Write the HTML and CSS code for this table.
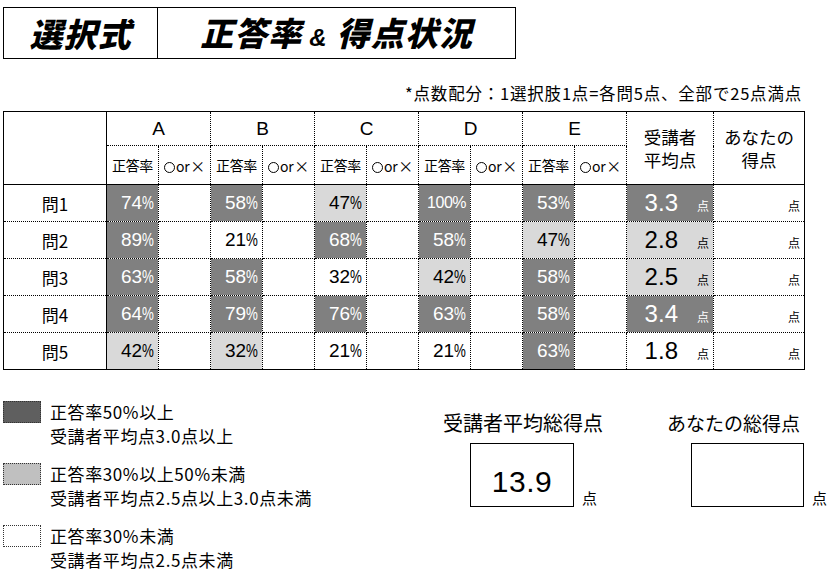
FILE: index.html
```html
<!DOCTYPE html>
<html lang="ja">
<head>
<meta charset="utf-8">
<link rel="stylesheet" href="styles.css">
</head>
<body>
<div class="page">
  <div class="title">
    <div class="title-left"><span class="title-text">選択式</span></div>
    <div class="title-right"><span class="title-text">正答率<span class="amp">&amp;</span>得点状況</span></div>
  </div>
  <div class="note">*点数配分：1選択肢1点=各問5点、全部で25点満点</div>
  <table class="grid">
    <colgroup>
      <col class="c-label">
      <col class="c-half"><col class="c-half">
      <col class="c-half"><col class="c-half">
      <col class="c-half"><col class="c-half">
      <col class="c-half"><col class="c-half">
      <col class="c-half"><col class="c-half">
      <col class="c-avg">
      <col class="c-you">
    </colgroup>
    <tr class="hr1">
      <td class="label-head" rowspan="2"></td>
      <td class="choice" colspan="2">A</td>
      <td class="choice" colspan="2">B</td>
      <td class="choice" colspan="2">C</td>
      <td class="choice" colspan="2">D</td>
      <td class="choice" colspan="2">E</td>
      <td class="head2" rowspan="2">受講者<br>平均点</td>
      <td class="head2" rowspan="2">あなたの<br>得点</td>
    </tr>
    <tr class="hr2">
      <td class="sub">正答率</td><td class="sub"><span class="circ" aria-label="○"></span>or<span class="cross">×</span></td>
      <td class="sub">正答率</td><td class="sub"><span class="circ" aria-label="○"></span>or<span class="cross">×</span></td>
      <td class="sub">正答率</td><td class="sub"><span class="circ" aria-label="○"></span>or<span class="cross">×</span></td>
      <td class="sub">正答率</td><td class="sub"><span class="circ" aria-label="○"></span>or<span class="cross">×</span></td>
      <td class="sub">正答率</td><td class="sub"><span class="circ" aria-label="○"></span>or<span class="cross">×</span></td>
    </tr>
    <tr class="row">
      <td class="q">問1</td>
      <td class="p dark">74<span class="pc">%</span></td><td></td>
      <td class="p dark">58<span class="pc">%</span></td><td></td>
      <td class="p light">47<span class="pc">%</span></td><td></td>
      <td class="p dark thin">100%</td><td></td>
      <td class="p dark">53<span class="pc">%</span></td><td></td>
      <td class="avg dark"><span class="num">3.3</span><span class="pt">点</span></td>
      <td class="you"><span class="pt">点</span></td>
    </tr>
    <tr class="row">
      <td class="q">問2</td>
      <td class="p dark">89<span class="pc">%</span></td><td></td>
      <td class="p">21<span class="pc">%</span></td><td></td>
      <td class="p dark">68<span class="pc">%</span></td><td></td>
      <td class="p dark">58<span class="pc">%</span></td><td></td>
      <td class="p light">47<span class="pc">%</span></td><td></td>
      <td class="avg light"><span class="num">2.8</span><span class="pt">点</span></td>
      <td class="you"><span class="pt">点</span></td>
    </tr>
    <tr class="row">
      <td class="q">問3</td>
      <td class="p dark">63<span class="pc">%</span></td><td></td>
      <td class="p dark">58<span class="pc">%</span></td><td></td>
      <td class="p">32<span class="pc">%</span></td><td></td>
      <td class="p light">42<span class="pc">%</span></td><td></td>
      <td class="p dark">58<span class="pc">%</span></td><td></td>
      <td class="avg light"><span class="num">2.5</span><span class="pt">点</span></td>
      <td class="you"><span class="pt">点</span></td>
    </tr>
    <tr class="row">
      <td class="q">問4</td>
      <td class="p dark">64<span class="pc">%</span></td><td></td>
      <td class="p dark">79<span class="pc">%</span></td><td></td>
      <td class="p dark">76<span class="pc">%</span></td><td></td>
      <td class="p dark">63<span class="pc">%</span></td><td></td>
      <td class="p dark">58<span class="pc">%</span></td><td></td>
      <td class="avg dark"><span class="num">3.4</span><span class="pt">点</span></td>
      <td class="you"><span class="pt">点</span></td>
    </tr>
    <tr class="row">
      <td class="q">問5</td>
      <td class="p light">42<span class="pc">%</span></td><td></td>
      <td class="p light">32<span class="pc">%</span></td><td></td>
      <td class="p">21<span class="pc">%</span></td><td></td>
      <td class="p">21<span class="pc">%</span></td><td></td>
      <td class="p dark">63<span class="pc">%</span></td><td></td>
      <td class="avg"><span class="num">1.8</span><span class="pt">点</span></td>
      <td class="you"><span class="pt">点</span></td>
    </tr>
  </table>

  <div class="bottom">
    <div class="legend">
      <div class="legend-item">
        <div class="swatch swatch-dark"></div>
        <div class="legend-text">正答率50%以上<br>受講者平均点3.0点以上</div>
      </div>
      <div class="legend-item">
        <div class="swatch swatch-light"></div>
        <div class="legend-text">正答率30%以上50%未満<br>受講者平均点2.5点以上3.0点未満</div>
      </div>
      <div class="legend-item">
        <div class="swatch swatch-white"></div>
        <div class="legend-text">正答率30%未満<br>受講者平均点2.5点未満</div>
      </div>
    </div>
    <div class="total total-avg">
      <div class="total-label">受講者平均総得点</div>
      <div class="total-row">
        <div class="total-box"><span class="total-num">13.9</span></div>
        <span class="total-unit">点</span>
      </div>
    </div>
    <div class="total total-you">
      <div class="total-label">あなたの総得点</div>
      <div class="total-row">
        <div class="total-box"></div>
        <span class="total-unit">点</span>
      </div>
    </div>
  </div>
</div>
</body>
</html>
```

FILE: styles.css
```css
html, body {
  margin: 0;
  padding: 0;
  background: #fff;
}
body {
  font-family: "Noto Sans CJK JP", "Noto Sans", sans-serif;
  color: #000;
}
.page {
  padding: 7px 0 0 3px;
}

/* Title */
.title {
  display: flex;
  width: 513px;
  height: 52px;
  box-sizing: border-box;
  border: 1px solid #000;
}
.title-left {
  width: 153px;
  border-right: 1px solid #000;
  display: flex;
  align-items: center;
  justify-content: center;
}
.title-right {
  flex: 1;
  display: flex;
  align-items: center;
  justify-content: center;
}
.title-text {
  font-size: 33px;
  font-weight: 900;
  font-style: italic;
  line-height: 1;
  letter-spacing: 1px;
}
.amp {
  font-size: 24px;
  font-weight: 700;
  margin: 0 9px 0 7px;
  font-family: "Liberation Sans", sans-serif;
}

/* Note */
.note {
  width: 799px;
  text-align: right;
  font-size: 16.5px;
  line-height: 20px;
  margin-top: 24px;
  letter-spacing: 0.8px;
}

/* Table */
.grid {
  border-collapse: collapse;
  table-layout: fixed;
  margin-top: 8px;
  border: 1px solid #000;
}
.c-label { width: 103px; }
.c-half { width: 52px; }
.c-avg { width: 87px; }
.c-you { width: 91px; }
.grid td {
  border: 1px dotted #000;
  padding: 0;
  white-space: nowrap;
  overflow: hidden;
}
.grid .label-head,
.grid .q {
  border-right: 1px solid #000;
}
.hr2 td,
.grid .head2,
.grid .label-head {
  border-bottom: 1px solid #000;
}
.hr1 { height: 34px; }
.hr2 { height: 39px; }
.row { height: 37px; }

.choice {
  text-align: center;
  font-family: "Liberation Sans", sans-serif;
  font-size: 19px;
  font-weight: 300;
}
.sub {
  text-align: center;
  font-size: 14px;
  letter-spacing: -0.3px;
}
.circ {
  display: inline-block;
  width: 11px;
  height: 11px;
  box-sizing: border-box;
  border: 1px solid #000;
  border-radius: 50%;
  margin-right: 1px;
  vertical-align: -1px;
}
.cross {
  font-size: 15px;
  margin-left: 1px;
}
.head2 {
  text-align: center;
  font-size: 17.5px;
  line-height: 23px;
}
.q {
  text-align: center;
  font-size: 17px;
}
.p {
  text-align: right;
  padding-right: 4px !important;
  font-family: "Liberation Sans", sans-serif;
  font-size: 19px;
}
.pc {
  display: inline-block;
  transform: scaleX(0.7);
  transform-origin: left center;
  margin-right: -5px;
}
.thin {
  font-size: 16px;
  font-weight: 300;
  letter-spacing: -0.5px;
}
.dark {
  background: #808080;
  color: #fff;
}
.light {
  background: #d9d9d9;
}
.avg {
  text-align: right;
  vertical-align: bottom;
  padding-right: 4px !important;
}
.num {
  font-family: "Liberation Sans", sans-serif;
  font-size: 24px;
  line-height: 30px;
}
.pt {
  font-size: 12px;
  margin-left: 19px;
  line-height: 30px;
}
.you {
  text-align: right;
  vertical-align: bottom;
  padding-right: 4px !important;
}

/* Bottom */
.bottom {
  display: flex;
  margin-top: 31px;
}
.legend {
  width: 440px;
}
.legend-item {
  display: flex;
  gap: 9px;
  margin-bottom: 15px;
}
.swatch {
  width: 38px;
  height: 22px;
  box-sizing: border-box;
  border: 1px dotted #333;
}
.swatch-dark { background: #5f5f5f; }
.swatch-light { background: #c0c0c0; }
.swatch-white { background: #fff; }
.legend-text {
  font-size: 17px;
  line-height: 24px;
  margin-top: -1px;
  letter-spacing: 0.6px;
}

.total {
  display: flex;
  flex-direction: column;
}
.total-avg {
  width: 162px;
}
.total-you {
  margin-left: 62px;
}
.total-label {
  font-size: 19px;
  line-height: 24px;
  margin-top: 10px;
  white-space: nowrap;
}
.total-avg .total-label {
  font-size: 20px;
}
.total-row {
  display: flex;
  align-items: flex-end;
  margin-top: 8px;
}
.total-avg .total-row { padding-left: 27px; }
.total-you .total-row { padding-left: 24px; }
.total-box {
  height: 64px;
  box-sizing: border-box;
  border: 1px solid #000;
  display: flex;
  align-items: flex-end;
  justify-content: center;
}
.total-avg .total-box { width: 104px; }
.total-you .total-box { width: 113px; }
.total-num {
  font-family: "Liberation Sans", sans-serif;
  font-size: 30px;
  line-height: 30px;
  margin-bottom: 9px;
  letter-spacing: 0.5px;
}
.total-unit {
  font-size: 15px;
  line-height: 18px;
  margin-left: 8px;
}
```
